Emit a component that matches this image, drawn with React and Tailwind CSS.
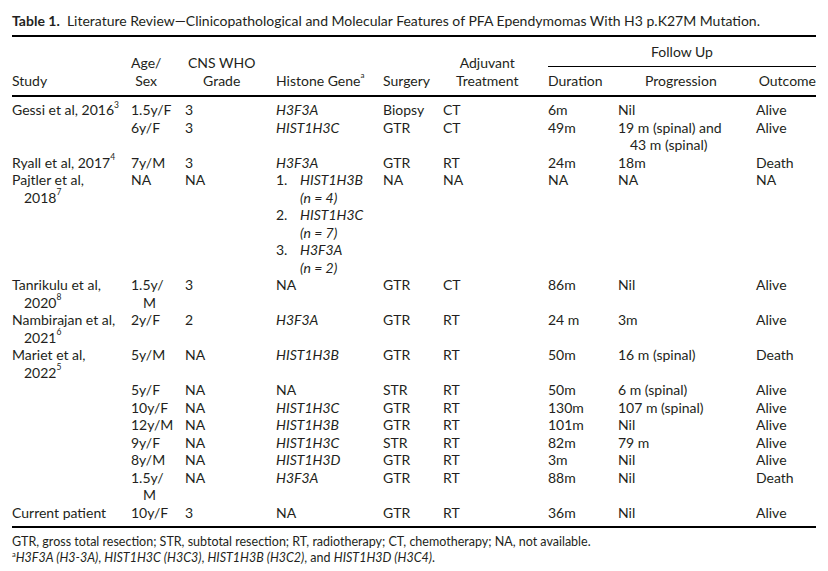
import React from "react";

const FONT = { fontFamily: "Lato, 'Open Sans', sans-serif" };

// Table rows — each cell is an array of lines, wrapped lines get a hanging indent
const rows = [
  [["Gessi et al, 2016", 3], ["1.5y/F"], ["3"], ["H3F3A"], ["Biopsy"], ["CT"], ["6m"], ["Nil"], ["Alive"]],
  [null, ["6y/F"], ["3"], ["HIST1H3C"], ["GTR"], ["CT"], ["49m"], ["19 m (spinal) and", "43 m (spinal)"], ["Alive"]],
  [["Ryall et al, 2017", 4], ["7y/M"], ["3"], ["H3F3A"], ["GTR"], ["RT"], ["24m"], ["18m"], ["Death"]],
  [["Pajtler et al,", "2018", 7], ["NA"], ["NA"], "list", ["NA"], ["NA"], ["NA"], ["NA"], ["NA"]],
  [["Tanrikulu et al,", "2020", 8], ["1.5y/", "M"], ["3"], ["NA", "plain"], ["GTR"], ["CT"], ["86m"], ["Nil"], ["Alive"]],
  [["Nambirajan et al,", "2021", 6], ["2y/F"], ["2"], ["H3F3A"], ["GTR"], ["RT"], ["24 m"], ["3m"], ["Alive"]],
  [["Mariet et al,", "2022", 5], ["5y/M"], ["NA"], ["HIST1H3B"], ["GTR"], ["RT"], ["50m"], ["16 m (spinal)"], ["Death"]],
  [null, ["5y/F"], ["NA"], ["NA", "plain"], ["STR"], ["RT"], ["50m"], ["6 m (spinal)"], ["Alive"]],
  [null, ["10y/F"], ["NA"], ["HIST1H3C"], ["GTR"], ["RT"], ["130m"], ["107 m (spinal)"], ["Alive"]],
  [null, ["12y/M"], ["NA"], ["HIST1H3B"], ["GTR"], ["RT"], ["101m"], ["Nil"], ["Alive"]],
  [null, ["9y/F"], ["NA"], ["HIST1H3C"], ["STR"], ["RT"], ["82m"], ["79 m"], ["Alive"]],
  [null, ["8y/M"], ["NA"], ["HIST1H3D"], ["GTR"], ["RT"], ["3m"], ["Nil"], ["Alive"]],
  [null, ["1.5y/", "M"], ["NA"], ["H3F3A"], ["GTR"], ["RT"], ["88m"], ["Nil"], ["Death"]],
  [["Current patient"], ["10y/F"], ["3"], ["NA", "plain"], ["GTR"], ["RT"], ["36m"], ["Nil"], ["Alive"]],
];

const genes = [
  ["1.", "HIST1H3B", "(n = 4)"],
  ["2.", "HIST1H3C", "(n = 7)"],
  ["3.", "H3F3A", "(n = 2)"],
];

function StudyCell({ value }) {
  if (!value) return null;
  const ref = typeof value[value.length - 1] === "number" ? value[value.length - 1] : null;
  const lines = ref ? value.slice(0, -1) : value;
  return lines.map((line, i) => (
    <React.Fragment key={i}>
      {i > 0 && <br />}
      {line}
      {ref && i === lines.length - 1 && <sup className="text-[8.5px] leading-none align-[3px]">{ref}</sup>}
    </React.Fragment>
  ));
}

function Lines({ value }) {
  return value.map((line, i) => (
    <React.Fragment key={i}>
      {i > 0 && <br />}
      {line}
    </React.Fragment>
  ));
}

function GeneList() {
  return (
    <div>
      {genes.map(([n, g, count]) => (
        <div key={n} className="flex">
          <span className="w-6 shrink-0">{n}</span>
          <div className="italic">
            {g}
            <br />
            {count}
          </div>
        </div>
      ))}
    </div>
  );
}

const td = "align-top p-0 pl-3 -indent-3 whitespace-nowrap";

export default function App() {
  return (
    <div className="bg-white w-[828px] h-[571px] text-[#231f20] px-3 pt-3" style={FONT}>
      <p className="text-[14px] leading-[18px] pb-[5px] whitespace-nowrap">
        <b>Table 1.</b>&nbsp; Literature Review—Clinicopathological and Molecular Features of PFA Ependymomas With H3 p.K27M
        Mutation.
      </p>

      <table className="table-fixed border-collapse w-[804px] text-[14px] leading-[17.5px]">
        <colgroup>
          <col className="w-[119px]" />
          <col className="w-[54px]" />
          <col className="w-[91px]" />
          <col className="w-[107px]" />
          <col className="w-[60px]" />
          <col className="w-[105px]" />
          <col className="w-[70px]" />
          <col className="w-[138px]" />
          <col className="w-[60px]" />
        </colgroup>
        <thead>
          <tr className="border-t-2 border-black">
            <th rowSpan={2} className="font-normal text-left align-bottom pb-[6px]">Study</th>
            <th rowSpan={2} className="font-normal text-left align-bottom pb-[6px]">
              <span className="inline-block text-center">Age/<br />Sex</span>
            </th>
            <th rowSpan={2} className="font-normal text-left align-bottom pb-[6px] pl-[3px]">
              <span className="inline-block text-center">CNS WHO<br />Grade</span>
            </th>
            <th rowSpan={2} className="font-normal text-left align-bottom pb-[6px] whitespace-nowrap">
              Histone Gene<sup className="text-[8px] leading-none align-[4px]">a</sup>
            </th>
            <th rowSpan={2} className="font-normal text-left align-bottom pb-[6px]">Surgery</th>
            <th rowSpan={2} className="font-normal text-left align-bottom pb-[6px] pl-[13px]">
              <span className="inline-block text-center">Adjuvant<br />Treatment</span>
            </th>
            <th colSpan={3} className="font-normal text-center pt-[6px] pb-[5px] border-b-[1.5px] border-black">
              Follow Up
            </th>
          </tr>
          <tr className="border-b-2 border-black">
            <th className="font-normal text-left pt-[5px] pb-[6px]">Duration</th>
            <th className="font-normal text-left pt-[5px] pb-[6px] pl-[27px]">Progression</th>
            <th className="font-normal text-right pt-[5px] pb-[6px] whitespace-nowrap">Outcome</th>
          </tr>
        </thead>
        <tbody className="border-b-2 border-black">
          {rows.map((row, r) => (
            <tr key={r}>
              {row.map((cell, c) => {
                const pad = r === 0 ? " pt-[4px]" : r === rows.length - 1 ? " pb-[5px]" : "";
                if (c === 0) {
                  return (
                    <td key={c} className={td + pad}>
                      <StudyCell value={cell} />
                    </td>
                  );
                }
                if (c === 3) {
                  if (cell === "list") {
                    return (
                      <td key={c} className={"align-top p-0" + pad}>
                        <GeneList />
                      </td>
                    );
                  }
                  return (
                    <td key={c} className={td + pad + (cell[1] === "plain" ? "" : " italic")}>
                      {cell[0]}
                    </td>
                  );
                }
                return (
                  <td key={c} className={td + pad}>
                    <Lines value={cell} />
                  </td>
                );
              })}
            </tr>
          ))}
        </tbody>
      </table>

      <div className="text-[12.5px] leading-[16px] pt-[6px]">
        <p>GTR, gross total resection; STR, subtotal resection; RT, radiotherapy; CT, chemotherapy; NA, not available.</p>
        <p>
          <sup className="text-[7.5px] leading-none align-[1px]">a</sup>
          <i>H3F3A (H3-3A)</i>, <i>HIST1H3C (H3C3)</i>, <i>HIST1H3B (H3C2)</i>, and <i>HIST1H3D (H3C4)</i>.
        </p>
      </div>
    </div>
  );
}
